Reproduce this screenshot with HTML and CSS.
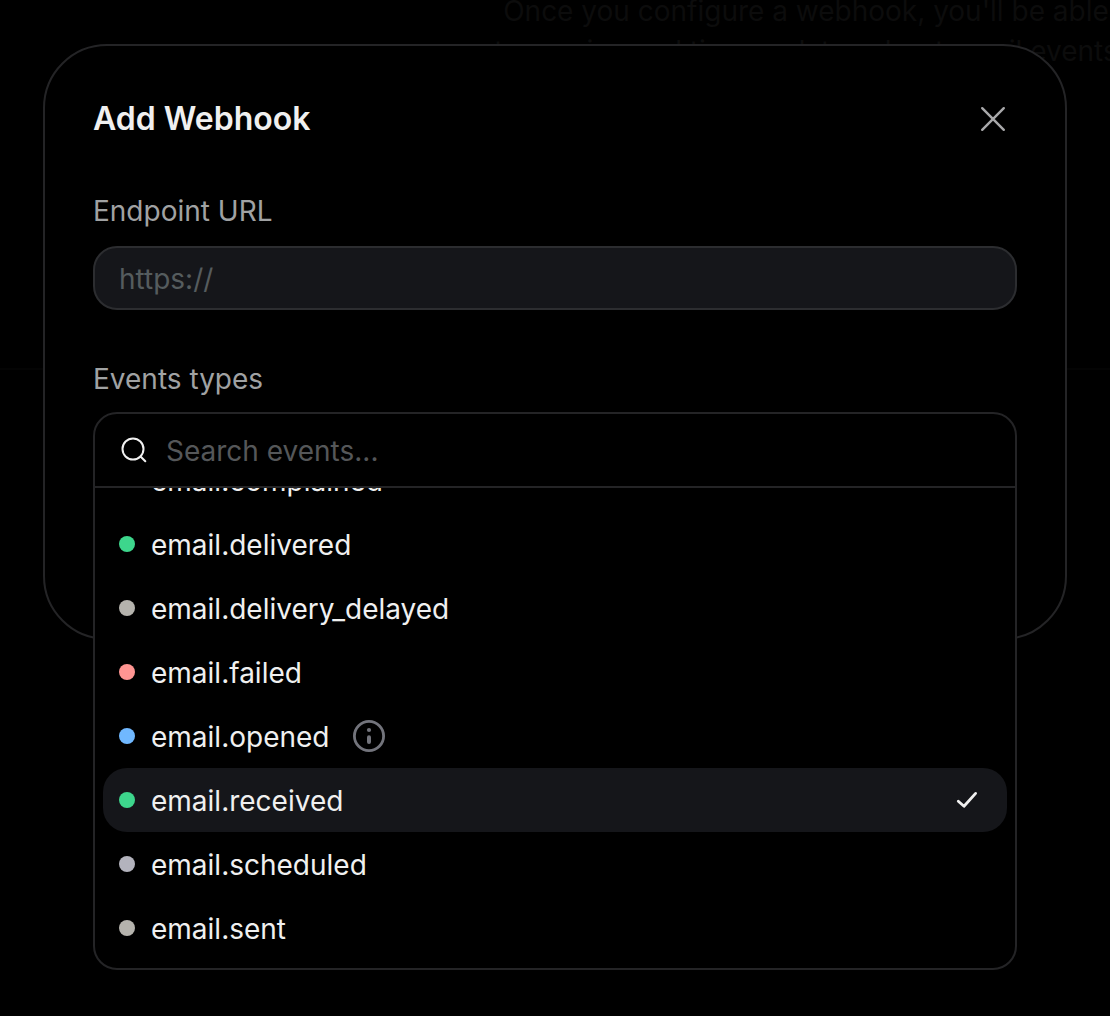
FILE: index.html
```html
<!DOCTYPE html>
<html lang="en">
<head>
<meta charset="utf-8">
<title>Add Webhook</title>
<link rel="stylesheet" href="styles.css">
</head>
<body>
<div class="backdrop">
  <p class="backdrop-text">Once you configure a webhook, you'll be able<br>to receive real time updates about email events</p>
</div>
<main class="modal">
  <header class="modal-header">
    <h1 class="title">Add Webhook</h1>
    <button class="close" aria-label="Close">
      <svg width="26" height="26" viewBox="0 0 26 26" fill="none" stroke="currentColor" stroke-width="2.4" stroke-linecap="round"><path d="M2.2 2.2 23.8 23.8M23.8 2.2 2.2 23.8"/></svg>
    </button>
  </header>
  <label class="label" for="url">Endpoint URL</label>
  <input class="input" id="url" type="text" placeholder="https://">
  <div class="label label-events">Events types</div>
  <div class="select">
    <div class="dropdown">
      <div class="search">
        <svg class="search-icon" width="28" height="28" viewBox="0 0 28 28" fill="none" stroke="currentColor" stroke-width="2" stroke-linecap="round"><circle cx="13" cy="13" r="10.5"/><path d="M20.5 20.5 25.3 25.3"/></svg>
        <input class="search-input" type="text" placeholder="Search events...">
      </div>
      <ul class="list">
        <li class="row"><span class="dot red"></span><span class="name">email.complained</span></li>
        <li class="row"><span class="dot green"></span><span class="name">email.delivered</span></li>
        <li class="row"><span class="dot sand"></span><span class="name">email.delivery_delayed</span></li>
        <li class="row"><span class="dot red"></span><span class="name">email.failed</span></li>
        <li class="row"><span class="dot blue"></span><span class="name">email.opened</span>
          <svg class="info" width="32" height="32" viewBox="0 0 32 32" fill="none"><circle cx="16" cy="16" r="14.6" stroke="currentColor" stroke-width="2.8"/><circle cx="16" cy="10" r="2.1" fill="currentColor"/><path d="M16 17.2v4.8" stroke="currentColor" stroke-width="4" stroke-linecap="round"/></svg>
        </li>
        <li class="row selected"><span class="dot green"></span><span class="name">email.received</span>
          <svg class="check" width="22" height="18" viewBox="0 0 22 18" fill="none" stroke="currentColor" stroke-width="2.8" stroke-linecap="round" stroke-linejoin="round"><path d="M2.3 10.2 8 15.3 19.6 2.4"/></svg>
        </li>
        <li class="row"><span class="dot slate"></span><span class="name">email.scheduled</span></li>
        <li class="row"><span class="dot sand"></span><span class="name">email.sent</span></li>
      </ul>
    </div>
  </div>
</main>
</body>
</html>
```
FILE: styles.css
```css
* { box-sizing: border-box; }
body {
  margin: 0;
  height: 1016px;
  padding: 44px 43px;
  background: #000;
  color: #f0f0f0;
  font: 28px/40px Inter, "Liberation Sans", sans-serif;
  overflow: hidden;
  position: relative;
}
.backdrop {
  position: absolute;
  inset: 0 0 auto;
  height: 370px;
  border-bottom: 2px solid #040404;
  overflow: hidden;
}
.backdrop-text {
  position: absolute;
  left: 486px;
  top: -9px;
  width: 640px;
  margin: 0;
  text-align: center;
  white-space: nowrap;
  color: #0c0c0c;
}
.modal {
  position: relative;
  height: 596px;
  padding: 48px;
  border: 2px solid #242426;
  border-radius: 64px;
  background: #000;
}
.modal-header {
  display: flex;
  align-items: center;
  justify-content: space-between;
  height: 50px;
  padding-right: 11px;
}
.title { margin: 0; font-size: 32px; font-weight: 600; line-height: 50px; }
.close {
  display: flex;
  padding: 0;
  border: 0;
  background: none;
  color: #a8a8aa;
}
.label { display: block; margin-top: 47px; line-height: 40px; color: #a0a2a3; }
.input {
  display: block;
  width: 100%;
  height: 64px;
  margin-top: 15px;
  padding: 2px 24px 0;
  border: 2px solid #2c2d30;
  border-radius: 24px;
  background: #15161a;
  color: #f0f0f0;
  font: inherit;
}
.input::placeholder { color: #555c5e; opacity: 1; }
.label-events { margin-top: 49px; }
.select { position: relative; height: 64px; margin-top: 13px; }
.dropdown {
  position: absolute;
  inset: 0 0 auto;
  height: 558px;
  display: flex;
  flex-direction: column;
  border: 2px solid #242426;
  border-radius: 24px;
  background: #000;
  overflow: hidden;
}
.search {
  flex: none;
  display: flex;
  align-items: center;
  gap: 18px;
  height: 74px;
  padding: 0 24px 0 25px;
  border-bottom: 2px solid #242426;
}
.search-input {
  flex: 1;
  padding: 2px 0 0;
  border: 0;
  background: none;
  color: #f0f0f0;
  font: inherit;
}
.search-input::placeholder { color: #555759; opacity: 1; }
.list {
  flex: 1;
  display: flex;
  flex-direction: column;
  justify-content: flex-end;
  min-height: 0;
  margin: 0;
  padding: 0 8px 8px;
  list-style: none;
  overflow: hidden;
}
.row {
  flex: none;
  display: flex;
  align-items: center;
  height: 64px;
  padding: 0 29px 0 16px;
  border-radius: 24px;
}
.selected { background: #15161a; }
.dot { width: 16px; height: 16px; margin-right: 16px; border-radius: 50%; }
.name { padding-top: 2px; }
.green { background: #3dd68c; }
.sand { background: #b5b3ad; }
.slate { background: #b3b3bd; }
.red { background: #ff9592; }
.blue { background: #70b8ff; }
.info { margin-left: 24px; color: #73747c; }
.check { margin-left: auto; }
```
